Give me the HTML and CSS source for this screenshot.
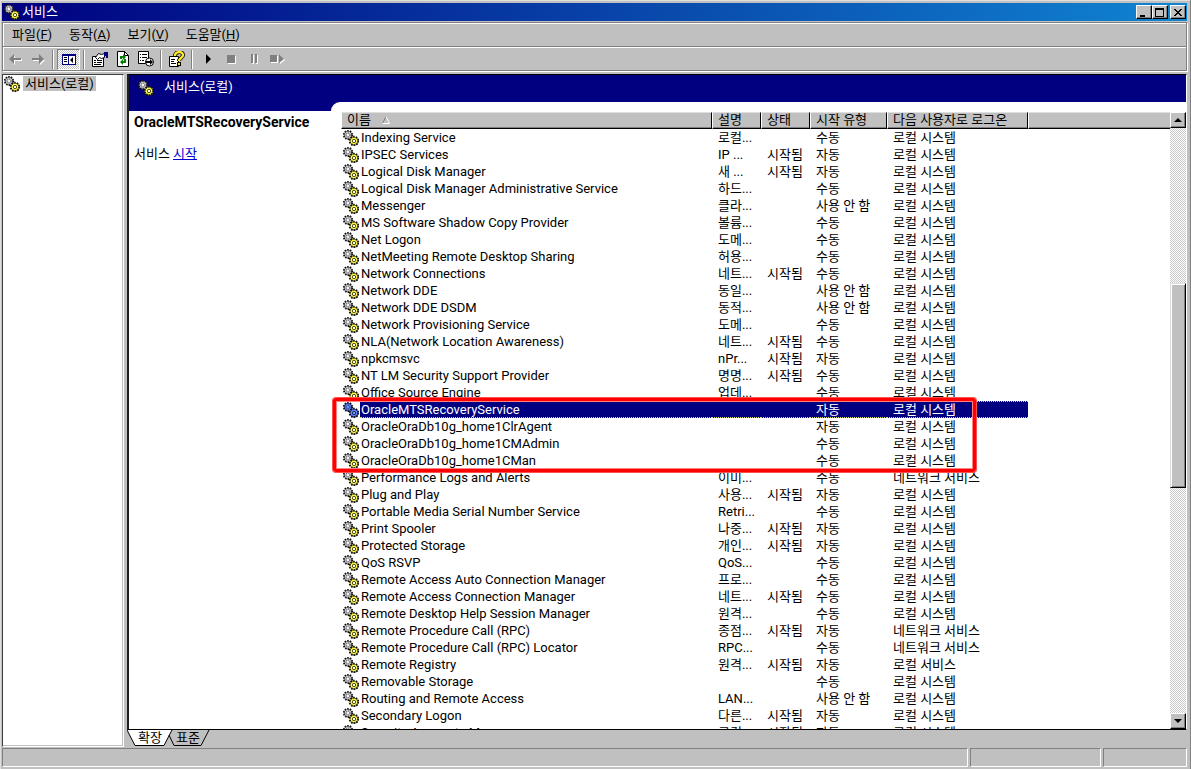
FILE: index.html
```html
<!DOCTYPE html>
<html lang="ko">
<head>
<meta charset="utf-8">
<title>서비스</title>
<link rel="stylesheet" href="styles.css">
</head>
<body>
<svg class="defs" aria-hidden="true">
  <symbol id="gears" viewBox="0 0 16 16">
    <circle cx="5" cy="5" r="3.800" fill="#d0d0d8" stroke="#999"/>
    <circle cx="5" cy="5" r="4.200" fill="none" stroke="#111" stroke-width="1.800" stroke-dasharray="1.500 1.140"/>
    <circle cx="5" cy="5" r="2" fill="none" stroke="#444" stroke-dasharray="1.200 .900"/>
    <circle cx="5" cy="5" r="1" fill="#fff"/>
    <circle cx="11.200" cy="11.200" r="4.200" fill="#444"/>
    <circle cx="10.800" cy="10.800" r="3.900" fill="#ffff58" stroke="#a8a020"/>
    <circle cx="11" cy="11" r="4.300" fill="none" stroke="#111" stroke-width="1.900" stroke-dasharray="1.500 1.200"/>
    <circle cx="11" cy="11" r="1.700" fill="#fff" stroke="#554c00"/>
  </symbol>
</svg>
<div class="window">
  <header class="titlebar">
    <svg class="gear"><use href="#gears"/></svg>
    <h1>서비스</h1>
    <button class="btn3d" aria-label="최소화"><svg viewBox="0 0 10 9"><path d="M1 7h5v2h-5z"/></svg></button>
    <button class="btn3d" aria-label="최대화"><svg viewBox="0 0 10 9"><path d="M0 0h9v9h-9zM1 2v6h7v-6z" fill-rule="evenodd"/></svg></button>
    <button class="btn3d close" aria-label="닫기"><svg viewBox="0 0 10 9"><path d="M1 1h2v1h1v1h2v-1h1v-1h2v1h-1v1h-1v1h-1v1h1v1h1v1h1v1h-2v-1h-1v-1h-2v1h-1v1h-2v-1h1v-1h1v-1h1v-1h-1v-1h-1v-1h-1z"/></svg></button>
  </header>
  <div class="bars">
    <nav class="menu">
      <button>파일(<u>F</u>)</button><button>동작(<u>A</u>)</button><button>보기(<u>V</u>)</button><button>도움말(<u>H</u>)</button>
    </nav>
    <div class="toolbar">
      <button aria-label="뒤로"><svg viewBox="0 0 16 16"><path d="M3 9l5-4v3h7v2h-7v4z" fill="#fff"/><path d="M2 8l5-5v4h7v2h-7v4z" fill="#808080"/></svg></button>
      <button aria-label="앞으로"><svg viewBox="0 0 16 16"><path d="M15 9l-5 5v-4h-7v-2h7z" fill="#fff"/><path d="M14 8l-5-5v4h-7v2h7v4z" fill="#808080"/></svg></button>
      <i class="sep"></i>
      <button class="pressed" aria-label="콘솔 트리 표시/숨기기"><svg viewBox="0 0 16 16"><path d="M1 3h14v11h-14z" fill="#000080"/><path d="M2 5h5v8h-5zM8 5h6v8h-6z" fill="#fff"/><path d="M3 6h3v1h-3zM3 8h3v1h-3zM3 10h3v1h-3zM12 6v6l-3-3z" fill="#000"/></svg></button>
      <i class="sep"></i>
      <button aria-label="속성"><svg viewBox="0 0 16 16"><path d="M.500 5.500h11v10h-11z" fill="#fff" stroke="#000"/><path d="M2 9h2v1h-2zM5 9h5v1h-5zM2 11h2v1h-2zM5 11h5v1h-5zM2 13h7v1h-7z"/><path d="M3.500 6.500l3-4 3 1 3-1v4l-3 1-2-1-2 2z" fill="#fff" stroke="#000"/><path d="M12 1h4v6h-2v-2h-2z" fill="#000080"/></svg></button>
      <button aria-label="새로 고침"><svg viewBox="0 0 16 16"><path d="M2.500 .500h7l4 4v11h-11z" fill="#fff" stroke="#000"/><path d="M9.500 .500v4h4" fill="none" stroke="#000"/><path d="M5 8v-3h3v-2l3 3-3 3v-2h-1v1zM11 8v4h-3v2l-3-3 3-3v2h1v-2z" fill="#008000"/></svg></button>
      <button aria-label="목록 내보내기"><svg viewBox="0 0 16 16"><path d="M.500 .500h10v12h-10z" fill="#fff" stroke="#000"/><path d="M2 3h1v1h-1zM4 3h5v1h-5zM2 6h1v1h-1zM4 6h5v1h-5zM2 9h1v1h-1zM4 9h2v1h-2z"/><circle cx="11.500" cy="11" r="4" fill="#fff" stroke="#000"/><path d="M8 10h4v-2l3 3-3 3v-2h-4z"/></svg></button>
      <i class="sep"></i>
      <button aria-label="도움말"><svg viewBox="0 0 16 16"><path d="M.500 5.500h9v10h-9z" fill="#fff" stroke="#000"/><path d="M2 8h4v1h-4zM2 10h3v1h-3zM2 12h5v1h-5z"/><path d="M6 5c0-5 8-5 8-1 0 3-4 3-4 6" fill="none" stroke="#000" stroke-width="4"/><path d="M6 5c0-5 8-5 8-1 0 3-4 3-4 6" fill="none" stroke="#ffe928" stroke-width="2.400"/><path d="M8 11h4v4h-4z" fill="#000"/><path d="M9 12h2v2h-2z" fill="#ffe928"/></svg></button>
      <i class="sep"></i>
      <button aria-label="서비스 시작"><svg viewBox="0 0 16 16"><path d="M6 3v10l5-5z"/></svg></button>
      <button aria-label="서비스 중지"><svg viewBox="0 0 16 16"><path d="M5 5h8v8h-8z" fill="#fff"/><path d="M4 4h8v8h-8z" fill="#808080"/></svg></button>
      <button aria-label="서비스 일시 중지"><svg viewBox="0 0 16 16"><path d="M6 4h2v9h-2zM10 4h2v9h-2z" fill="#fff"/><path d="M5 3h2v9h-2zM9 3h2v9h-2z" fill="#808080"/></svg></button>
      <button aria-label="서비스 다시 시작"><svg viewBox="0 0 16 16"><path d="M2 5h7v7h-7zM11 4l5 5-5 4z" fill="#fff"/><path d="M1 4h7v7h-7zM10 3l5 5-5 4z" fill="#808080"/></svg></button>
    </div>
  </div>
  <main class="panes">
    <aside class="tree">
      <svg class="gear"><use href="#gears"/></svg><span class="node">서비스(로컬)</span>
    </aside>
    <section class="right">
      <div class="view">
        <div class="banner"><svg class="gear"><use href="#gears"/></svg><h2>서비스(로컬)</h2></div>
        <div class="split">
          <div class="detail">
            <h3>OracleMTSRecoveryService</h3>
            <p>서비스 <a href="#">시작</a></p>
          </div>
          <div class="listwrap">
            <div class="list">
              <table>
                <colgroup><col class="c-icon"><col class="c-name"><col class="c-desc"><col class="c-state"><col class="c-type"><col class="c-logon"><col></colgroup>
                <thead><tr><th colspan="2">이름 <svg class="sort" viewBox="0 0 8 8"><path d="M.500 7.500l3.500-7" stroke="#808080" fill="none"/><path d="M4 .500l3.500 7h-7" stroke="#fff" fill="none"/></svg></th><th>설명</th><th>상태</th><th>시작 유형</th><th>다음 사용자로 로그온</th><th></th></tr></thead>
                <tbody id="services"></tbody>
              </table>
              <div class="highlight"></div>
            </div>
            <div class="scrollbar">
              <button class="btn3d" aria-label="위로"><svg viewBox="0 0 8 4"><path d="M4 0l4 4h-8z"/></svg></button>
              <div class="before"></div><div class="thumb"></div><div class="after"></div>
              <button class="btn3d" aria-label="아래로"><svg viewBox="0 0 8 4"><path d="M0 0h8l-4 4z"/></svg></button>
            </div>
          </div>
        </div>
      </div>
      <div class="tabs">
        <button class="tab active"><svg viewBox="0 0 46 16"><path d="M0 0l8 15.500h29l8-15.500" fill="#fff" stroke="#000"/></svg><span>확장</span></button>
        <button class="tab"><svg viewBox="0 0 46 16"><path d="M4 5l5 10.500h27l8-15.500" fill="none" stroke="#000"/></svg><span>표준</span></button>
      </div>
    </section>
  </main>
  <footer class="status"><div></div><div></div><div></div></footer>
</div>
<script src="services.js"></script>
</body>
</html>
```
FILE: styles.css
```css
* { box-sizing: border-box; }
body {
  margin: 0;
  font: 13px/17px Roboto, "Noto Sans CJK KR", sans-serif;
  color: #000;
  background: #c0c0c0;
}
h1, h2, h3, p { margin: 0; font-size: 13px; font-weight: 400; }
button { font: inherit; color: inherit; padding: 0; border: 0; background: none; }
svg { display: block; flex: none; }
.defs { display: none; }
.gear { width: 16px; height: 16px; }

.window {
  display: flex;
  flex-direction: column;
  height: 100vh;
  padding: 3px 4px 2px 2px;
  background: #c0c0c0;
  box-shadow: inset -1px 0 #808080, inset 1px 1px #dfdfdf;
}

.titlebar {
  display: flex;
  align-items: center;
  flex: none;
  height: 18px;
  padding: 0 1px 0 2px;
  color: #fff;
  background: linear-gradient(90deg, #000080, #1084d0);
}
.titlebar h1 { flex: 1; margin-left: 2px; line-height: 16px; }
.btn3d {
  display: grid;
  place-items: center;
  width: 16px;
  height: 14px;
  background: #c0c0c0;
  border: 1px solid;
  border-color: #fff #000 #000 #fff;
  box-shadow: inset -1px -1px #808080;
}
.titlebar .btn3d svg { width: 10px; height: 9px; }
.titlebar .close { margin-left: 2px; }

.bars {
  flex: none;
  margin-top: 1px;
  border: 1px solid #808080;
  box-shadow: inset 1px 1px #fff, 1px 1px #fff;
}
.menu {
  display: flex;
  align-items: center;
  gap: 17px;
  height: 24px;
  padding-left: 9px;
  border-bottom: 1px solid #808080;
}
.toolbar {
  display: flex;
  align-items: center;
  height: 23px;
  border-top: 1px solid #fff;
}
.toolbar button { display: grid; place-items: center; width: 23px; height: 21px; }
.toolbar svg { width: 16px; height: 16px; }
.toolbar .pressed {
  background: repeating-conic-gradient(#fff 0 25%, #c0c0c0 0 50%) 0 0 / 2px 2px;
  border: 1px solid;
  border-color: #808080 #fff #fff #808080;
}
.sep {
  width: 2px;
  height: 19px;
  margin: 0 3px;
  background: #808080;
  border-right: 1px solid #fff;
}

.panes { display: flex; flex: 1; min-height: 0; margin-top: 3px; }
.tree {
  display: flex;
  align-items: flex-start;
  flex: none;
  width: 122px;
  margin-right: 3px;
  padding: 1px 0 0 1px;
  background: #fff;
  border: 1px solid;
  border-color: #404040 #fff #fff #404040;
  box-shadow: inset -1px -1px #c0c0c0;
}
.node { margin-left: 3px; padding: 0 2px; background: #c0c0c0; line-height: 15px; }
.right { display: flex; flex: 1; flex-direction: column; min-width: 0; }
.view {
  display: flex;
  flex: 1;
  flex-direction: column;
  min-height: 0;
  background: #fff;
  border: 1px solid #000;
  border-left: 2px solid #202020;
  border-right-color: #fff;
}
.banner {
  display: flex;
  flex: none;
  height: 27px;
  padding: 5px 9px;
  color: #fff;
  background: #000080;
}
.banner h2 { margin-left: 10px; line-height: 14px; }
.split {
  display: flex;
  flex: 1;
  min-height: 0;
  background: linear-gradient(#000080 9px, #fff 9px);
}
.detail { flex: none; width: 202px; padding: 12px 0 0 5px; }
.detail h3 { font-size: 14px; font-weight: 700; }
.detail p { margin-top: 14px; }
.detail a { color: #0000d0; }
.listwrap {
  display: flex;
  flex: 1;
  min-width: 0;
  min-height: 0;
  padding: 10px 0 0 10px;
  background: #fff;
  border-top-left-radius: 9px;
}
.list {
  position: relative;
  flex: 1;
  min-width: 0;
  contain: size;
  clip-path: inset(-10px 0 0 -20px);
}
.list table { width: 100%; border-collapse: separate; border-spacing: 0; table-layout: fixed; }
.c-icon { width: 19px; }
.c-name { width: 352px; }
.c-desc { width: 49px; }
.c-state { width: 49px; }
.c-type { width: 77px; }
.c-logon { width: 141px; }
th {
  height: 17px;
  padding: 0 0 1px 5px;
  overflow: hidden;
  font-weight: 400;
  line-height: 14px;
  text-align: left;
  white-space: nowrap;
  background: #c0c0c0;
  border: 1px solid;
  border-color: #dfdfdf #000 #000 #fff;
  box-shadow: inset 0 -1px #808080;
}
th:last-child { border-right: 0; }
.sort { display: inline-block; width: 8px; height: 8px; margin-left: 8px; }
td {
  height: 17px;
  padding: 0 0 0 6px;
  overflow: hidden;
  line-height: 17px;
  white-space: nowrap;
}
td:first-child { padding-left: 2px; }
td:nth-child(2) { padding-left: 1px; }
.selected td:not(:first-child):not(:last-child) {
  color: #fff;
  background: #000080;
  border-top: 1px dotted #e0e060;
  border-bottom: 1px dotted #e0e060;
  line-height: 15px;
}
.selected .gear { filter: brightness(0.5) sepia(1) hue-rotate(190deg) saturate(4); }
.highlight {
  position: absolute;
  top: 286px;
  left: -8px;
  width: 643px;
  height: 74px;
  border: 3px solid #f00;
  border-radius: 3px;
  box-shadow: 0 0 0 1px #ff5050, inset 0 0 0 1px #ff8080;
}
.scrollbar {
  display: flex;
  flex: none;
  flex-direction: column;
  width: 16px;
  background: repeating-conic-gradient(#fff 0 25%, #c8c8c8 0 50%) 0 0 / 2px 2px;
}
.scrollbar .btn3d { flex: none; height: 16px; }
.scrollbar svg { width: 8px; height: 4px; }
.before { flex: 156; }
.thumb {
  flex: 203;
  background: #c0c0c0;
  border: 1px solid;
  border-color: #dfdfdf #000 #000 #dfdfdf;
  box-shadow: inset 1px 1px #fff, inset -1px -1px #808080;
}
.after { flex: 226; }

.tabs { display: flex; flex: none; height: 17px; }
.tab { display: grid; width: 46px; height: 16px; margin-right: -8px; }
.tab svg, .tab span { grid-area: 1 / 1; }
.tab svg { width: 46px; height: 16px; }
.tab span { line-height: 16px; text-align: center; }

.status {
  display: grid;
  grid-template-columns: 1fr 131px 84px;
  gap: 2px;
  flex: none;
  height: 19px;
  margin-top: 1px;
}
.status div { border: 1px solid; border-color: #808080 #fff #fff #808080; }
```
FILE: services.js
```js
const LOCAL = "로컬 시스템";
const NETWORK = "네트워크 서비스";
const services = [
  ["Indexing Service", "로컬...", "", "수동", LOCAL],
  ["IPSEC Services", "IP ...", "시작됨", "자동", LOCAL],
  ["Logical Disk Manager", "새 ...", "시작됨", "자동", LOCAL],
  ["Logical Disk Manager Administrative Service", "하드...", "", "수동", LOCAL],
  ["Messenger", "클라...", "", "사용 안 함", LOCAL],
  ["MS Software Shadow Copy Provider", "볼륨...", "", "수동", LOCAL],
  ["Net Logon", "도메...", "", "수동", LOCAL],
  ["NetMeeting Remote Desktop Sharing", "허용...", "", "수동", LOCAL],
  ["Network Connections", "네트...", "시작됨", "수동", LOCAL],
  ["Network DDE", "동일...", "", "사용 안 함", LOCAL],
  ["Network DDE DSDM", "동적...", "", "사용 안 함", LOCAL],
  ["Network Provisioning Service", "도메...", "", "수동", LOCAL],
  ["NLA(Network Location Awareness)", "네트...", "시작됨", "수동", LOCAL],
  ["npkcmsvc", "nPr...", "시작됨", "자동", LOCAL],
  ["NT LM Security Support Provider", "명명...", "시작됨", "수동", LOCAL],
  ["Office Source Engine", "업데...", "", "수동", LOCAL],
  ["OracleMTSRecoveryService", "", "", "자동", LOCAL],
  ["OracleOraDb10g_home1ClrAgent", "", "", "자동", LOCAL],
  ["OracleOraDb10g_home1CMAdmin", "", "", "수동", LOCAL],
  ["OracleOraDb10g_home1CMan", "", "", "수동", LOCAL],
  ["Performance Logs and Alerts", "이미...", "", "수동", NETWORK],
  ["Plug and Play", "사용...", "시작됨", "자동", LOCAL],
  ["Portable Media Serial Number Service", "Retri...", "", "수동", LOCAL],
  ["Print Spooler", "나중...", "시작됨", "자동", LOCAL],
  ["Protected Storage", "개인...", "시작됨", "자동", LOCAL],
  ["QoS RSVP", "QoS...", "", "수동", LOCAL],
  ["Remote Access Auto Connection Manager", "프로...", "", "수동", LOCAL],
  ["Remote Access Connection Manager", "네트...", "시작됨", "수동", LOCAL],
  ["Remote Desktop Help Session Manager", "원격...", "", "수동", LOCAL],
  ["Remote Procedure Call (RPC)", "종점...", "시작됨", "자동", NETWORK],
  ["Remote Procedure Call (RPC) Locator", "RPC...", "", "수동", NETWORK],
  ["Remote Registry", "원격...", "시작됨", "자동", "로컬 서비스"],
  ["Removable Storage", "", "", "수동", LOCAL],
  ["Routing and Remote Access", "LAN...", "", "사용 안 함", LOCAL],
  ["Secondary Logon", "다른...", "시작됨", "자동", LOCAL],
  ["Security Accounts Manager", "로컬...", "시작됨", "자동", LOCAL],
];
const gear = '<svg class="gear"><use href="#gears"/></svg>';
document.getElementById("services").innerHTML = services.map((row) => {
  const selected = row[0] === "OracleMTSRecoveryService" ? ' class="selected"' : "";
  const cells = row.map((text) => `<td>${text}</td>`).join("");
  return `<tr${selected}><td>${gear}</td>${cells}<td></td></tr>`;
}).join("");
```
